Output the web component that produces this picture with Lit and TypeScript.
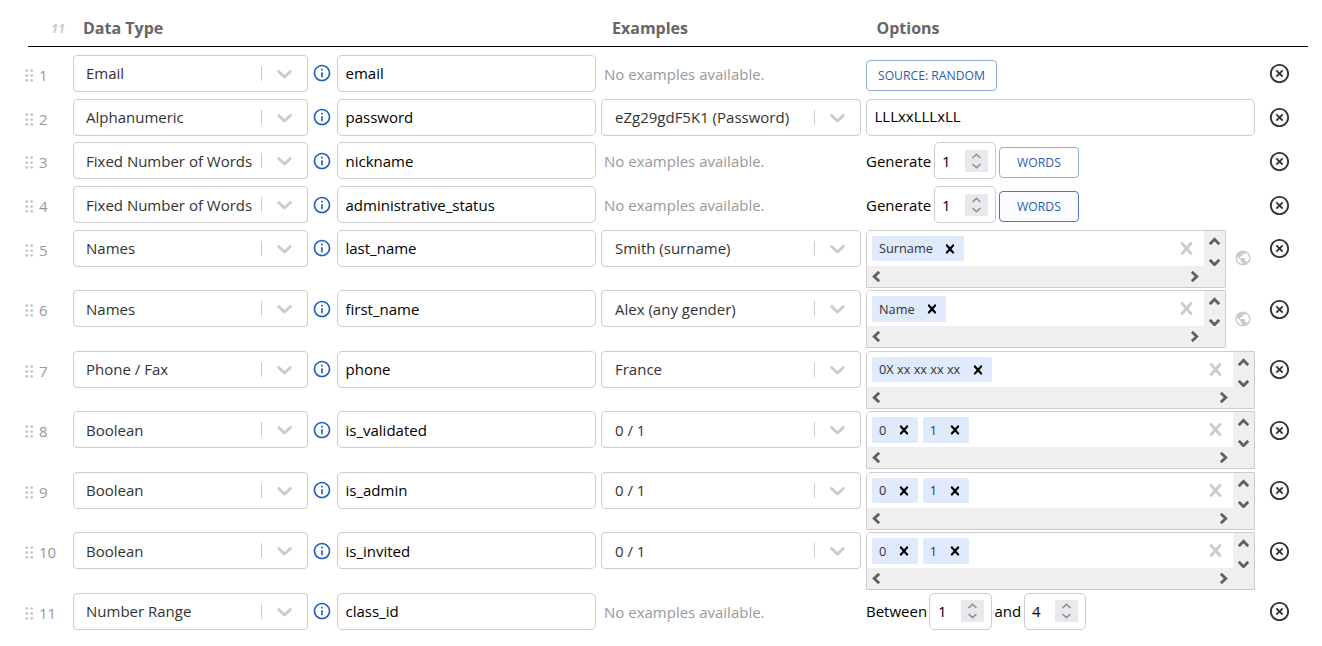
import { LitElement, html, css, svg, nothing } from "lit";
import { customElement, property } from "lit/decorators.js";
import { classMap } from "lit/directives/class-map.js";

type Options =
  | { kind: "source" }
  | { kind: "text"; value: string }
  | { kind: "words"; active?: boolean }
  | { kind: "tags"; tags: string[]; globe?: boolean }
  | { kind: "range"; from: string; to: string };

interface Row {
  type: string;
  name: string;
  example?: string;
  low?: boolean;
  options: Options;
}

const ROWS: Row[] = [
  { type: "Email", name: "email", options: { kind: "source" } },
  { type: "Alphanumeric", name: "password", example: "eZg29gdF5K1 (Password)", options: { kind: "text", value: "LLLxxLLLxLL" } },
  { type: "Fixed Number of Words", name: "nickname", low: true, options: { kind: "words" } },
  { type: "Fixed Number of Words", name: "administrative_status", low: true, options: { kind: "words", active: true } },
  { type: "Names", name: "last_name", example: "Smith (surname)", options: { kind: "tags", tags: ["Surname"], globe: true } },
  { type: "Names", name: "first_name", low: true, example: "Alex (any gender)", options: { kind: "tags", tags: ["Name"], globe: true } },
  { type: "Phone / Fax", name: "phone", example: "France", options: { kind: "tags", tags: ["0X xx xx xx xx"] } },
  { type: "Boolean", name: "is_validated", low: true, example: "0 / 1", options: { kind: "tags", tags: ["0", "1"] } },
  { type: "Boolean", name: "is_admin", example: "0 / 1", options: { kind: "tags", tags: ["0", "1"] } },
  { type: "Boolean", name: "is_invited", low: true, example: "0 / 1", options: { kind: "tags", tags: ["0", "1"] } },
  { type: "Number Range", name: "class_id", options: { kind: "range", from: "1", to: "4" } },
];

const CROSS = svg`<path d="M14.348 14.849c-0.469 0.469-1.229 0.469-1.697 0l-2.651-3.030-2.651 3.029c-0.469 0.469-1.229 0.469-1.697 0-0.469-0.469-0.469-1.229 0-1.697l2.758-3.15-2.759-3.152c-0.469-0.469-0.469-1.228 0-1.697s1.228-0.469 1.697 0l2.652 3.031 2.651-3.031c0.469-0.469 1.228-0.469 1.697 0s0.469 1.229 0 1.697l-2.758 3.152 2.758 3.15c0.469 0.469 0.469 1.229 0 1.698z"/>`;
const CHEVRON = svg`<path d="M4.516 7.548c0.436-0.446 1.043-0.481 1.576 0l3.908 3.747 3.908-3.747c0.533-0.481 1.141-0.446 1.574 0 0.436 0.445 0.408 1.197 0 1.615-0.406 0.418-4.695 4.502-4.695 4.502-0.217 0.223-0.502 0.335-0.787 0.335s-0.57-0.112-0.789-0.335c0 0-4.287-4.084-4.695-4.502s-0.436-1.17 0-1.615z"/>`;
const INFO = svg`<path d="M11 7h2v2h-2zm0 4h2v6h-2zm1-9C6.48 2 2 6.48 2 12s4.48 10 10 10 10-4.48 10-10S17.52 2 12 2zm0 18c-4.41 0-8-3.59-8-8s3.59-8 8-8 8 3.59 8 8-3.59 8-8 8z"/>`;
const REMOVE = svg`<path d="M14.59 8L12 10.59 9.41 8 8 9.41 10.59 12 8 14.59 9.41 16 12 13.41 14.59 16 16 14.59 13.41 12 16 9.41 14.59 8zM12 2C6.47 2 2 6.47 2 12s4.47 10 10 10 10-4.47 10-10S17.53 2 12 2zm0 18c-4.41 0-8-3.59-8-8s3.59-8 8-8 8 3.59 8 8-3.59 8-8 8z"/>`;
const GLOBE = svg`<path d="M12 2C6.48 2 2 6.48 2 12s4.48 10 10 10 10-4.48 10-10S17.52 2 12 2zm-1 17.93c-3.95-.49-7-3.85-7-7.93 0-.62.08-1.21.21-1.79L9 15v1c0 1.1.9 2 2 2v1.93zm6.9-2.54c-.26-.81-1-1.39-1.9-1.39h-1v-3c0-.55-.45-1-1-1H8v-2h2c.55 0 1-.45 1-1V7h2c1.1 0 2-.9 2-2v-.41c2.93 1.19 5 4.06 5 7.41 0 2.08-.8 3.97-2.1 5.39z"/>`;

const shared = css`
  * {
    box-sizing: border-box;
  }
  svg {
    display: block;
    flex: none;
  }
`;

@customElement("select-box")
export class SelectBox extends LitElement {
  @property() value = "";

  static styles = [
    shared,
    css`
      :host {
        display: flex;
        height: 37px;
        border: 1px solid #ccc;
        border-radius: 4px;
        background: #fff;
      }
      .value {
        flex: 1;
        padding-left: var(--inset, 12px);
        line-height: 35px;
        color: #333;
        white-space: nowrap;
        padding-top: var(--low, 0px);
      }
      .bar {
        width: 1px;
        height: 15px;
        margin-top: 10px;
        background: #ccc;
      }
      .arrow {
        width: 25px;
        height: 25px;
        margin: 5px 10px 0 10px;
        fill: #ccc;
      }
    `,
  ];

  render() {
    return html`<span class="value">${this.value}</span><span class="bar"></span>
      <svg class="arrow" viewBox="0 0 20 20">${CHEVRON}</svg>`;
  }
}

@customElement("number-box")
export class NumberBox extends LitElement {
  @property() value = "";

  static styles = [
    shared,
    css`
      :host {
        display: flex;
        justify-content: space-between;
        width: 62px;
        height: 37px;
        padding: 0 7px;
        border: 1px solid #ccc;
        border-radius: 5px;
        line-height: 35px;
        background: #fff;
      }
      .value {
        padding-top: var(--low, 0px);
      }
      .spin {
        margin-top: calc(6px + var(--low, 0px));
        width: 23px;
        height: 22px;
        background: #e9e9ed;
        fill: none;
        stroke: #8f8f9d;
        stroke-width: 1.6;
      }
    `,
  ];

  render() {
    return html`<span class="value">${this.value}</span>
      <svg class="spin" viewBox="0 0 23 22"><path d="M7.5 8 11.5 4.3 15.5 8M7.5 14 11.5 17.7 15.5 14" /></svg>`;
  }
}

@customElement("tag-box")
export class TagBox extends LitElement {
  @property({ attribute: false }) tags: string[] = [];

  static styles = [
    shared,
    css`
      :host {
        display: grid;
        grid-template-columns: 1fr 21px;
        grid-template-rows: 35px 21px;
        height: 58px;
        border: 1px solid #ccc;
        border-top-left-radius: 5px;
        background: #efefef;
        overflow: hidden;
      }
      .field {
        display: flex;
        gap: 5px;
        padding: 5px 5px 0;
        background: #fff;
      }
      .tag {
        display: flex;
        height: calc(25px + var(--low, 0px));
        padding: 0 5px 0 7px;
        gap: 8.5px;
        border-radius: 2px;
        background: #e0eafd;
        color: #333;
        font-size: 12.75px;
        line-height: 25px;
        white-space: nowrap;
      }
      .label {
        padding-top: var(--low, 0px);
      }
      .cross {
        width: 18px;
        height: 18px;
        margin-top: 4px;
        fill: #000;
      }
      .clear {
        width: 25px;
        height: 25px;
        margin-left: auto;
        fill: #ccc;
      }
      .vertical,
      .horizontal {
        display: flex;
        justify-content: space-between;
      }
      .vertical {
        flex-direction: column;
        align-items: center;
        padding-top: 6px;
      }
      .horizontal {
        align-items: center;
        padding: 0 5px 0 5px;
      }
      .mark {
        fill: none;
        stroke: #606060;
        stroke-width: 2.8;
      }
    `,
  ];

  render() {
    return html`
      <div class="field">
        ${this.tags.map(
          (t) => html`<span class="tag"><span class="label">${t}</span><svg class="cross" viewBox="0 0 20 20">${CROSS}</svg></span>`,
        )}
        <svg class="clear" viewBox="0 0 20 20">${CROSS}</svg>
      </div>
      <div class="vertical">
        <svg class="mark" width="11" height="8"><path d="M.8 7.2 5.5 2.2 10.2 7.2" /></svg>
        <svg class="mark" width="11" height="7"><path d="M.8 .8 5.5 5.8 10.2 .8" /></svg>
      </div>
      <div class="horizontal">
        <svg class="mark" width="8" height="11"><path d="M7.2 .8 2.2 5.5 7.2 10.2" /></svg>
        <svg class="mark" width="8" height="11"><path d="M.8 .8 5.8 5.5 .8 10.2" /></svg>
      </div>
    `;
  }
}

@customElement("app-root")
export class AppRoot extends LitElement {
  static styles = [
    shared,
    css`
      :host {
        display: block;
        height: 646px;
        overflow: hidden;
        background: #fff;
        color: #000;
        font-family: "Open Sans", "Noto Sans", sans-serif;
        font-size: 15px;
      }
      .head {
        display: grid;
        grid-template-columns: 55px 529px 264.5px 1fr;
        height: 47px;
        margin: 0 14px 8px 28px;
        padding-top: 10px;
        border-bottom: 1px solid #000;
        color: #666;
        font-size: 16px;
        font-weight: 700;
        line-height: 36px;
      }
      .count {
        padding-left: 23px;
        color: #ccc;
        font-size: 12.75px;
        font-style: italic;
        font-weight: 700;
      }
      .rows {
        display: grid;
        grid-template-rows: 44px 43px 44px 44px 60px 61px 60px 61px 60px 61px 44px;
        padding-left: 25px;
      }
      .row {
        display: grid;
        grid-template-columns: 14px 34px 235px 29px 259px 5px 260px 5px 389px 48px;
        align-items: start;
      }
      .row.low {
        --low: 1px;
      }
      .grip {
        margin-top: 14px;
        fill: #ccc;
      }
      .index {
        padding-top: 2px;
        color: #999;
        line-height: 37px;
      }
      .info {
        margin: calc(8px + var(--low, 0px)) 0 0 4px;
        fill: #2260bd;
      }
      .name,
      .text {
        width: 100%;
        height: 37px;
        margin: 0;
        padding: 0 7.5px 2px;
        border: 1px solid #ccc;
        border-radius: 5px;
        background: #fff;
        color: #000;
        font: inherit;
      }
      .low .name {
        padding: 1px 7.5px 0;
      }
      .example {
        grid-column: 7;
        --inset: 13px;
      }
      .none {
        padding: 1px 0 0 3px;
        color: #999;
        line-height: 37px;
      }
      .options {
        grid-column: 9;
        display: flex;
        line-height: 37px;
      }
      .word {
        padding-top: var(--low, 0px);
      }
      .wide {
        width: 63px;
        padding: 0 7.5px 0 8px;
      }
      .button {
        height: 31px;
        margin: 5px 0 0;
        padding: 0;
        border: 1px solid #91ade0;
        border-radius: 4px;
        background: #fff;
        color: #275cb4;
        font: inherit;
        font-size: 12.2px;
        line-height: 29px;
      }
      .source {
        width: 131px;
      }
      .words {
        width: 80px;
        margin-left: 3px;
      }
      .active {
        border-color: #4a77c4;
        background: #f9fbfe;
      }
      .gap-a {
        width: 68px;
      }
      .gap-b {
        width: 63px;
      }
      .gap-c {
        width: 32px;
        padding-left: 2.5px;
      }
      .tags {
        flex: 1;
      }
      .globe {
        margin: calc(19px + var(--low, 0px)) 3.5px 0 7.5px;
        fill: #ccc;
      }
      .remove {
        margin: calc(7px + var(--low, 0px)) 0 0 12.7px;
        fill: #333;
      }
    `,
  ];

  private options(o: Options) {
    switch (o.kind) {
      case "source":
        return html`<button class="button source">SOURCE: RANDOM</button>`;
      case "text":
        return html`<input class="text" .value=${o.value} />`;
      case "words":
        return html`<span class="word gap-a">Generate</span><number-box value="1"></number-box>
          <button class=${classMap({ button: true, words: true, active: !!o.active })}>WORDS</button>`;
      case "range":
        return html`<span class="word gap-b">Between</span><number-box class="wide" value=${o.from}></number-box>
          <span class="word gap-c">and</span><number-box value=${o.to}></number-box>`;
      case "tags":
        return html`<tag-box class="tags" .tags=${o.tags}></tag-box>
          ${o.globe ? html`<svg class="globe" width="18" height="18" viewBox="0 0 24 24">${GLOBE}</svg>` : nothing}`;
    }
  }

  render() {
    return html`
      <div class="head">
        <span class="count">11</span><span>Data Type</span><span>Examples</span><span>Options</span>
      </div>
      <div class="rows">
        ${ROWS.map(
          (r, i) => html`
            <div class=${classMap({ row: true, low: !!r.low })}>
              <svg class="grip" width="9" height="13">
                ${[1.8, 6.6].map((x) => [1.6, 6.4, 11.2].map((y) => svg`<circle cx=${x} cy=${y} r="1.5" />`))}
              </svg>
              <span class="index">${i + 1}</span>
              <select-box value=${r.type}></select-box>
              <svg class="info" width="20" height="20" viewBox="0 0 24 24">${INFO}</svg>
              <input class="name" .value=${r.name} />
              ${r.example
                ? html`<select-box class="example" value=${r.example}></select-box>`
                : html`<span class="example none">No examples available.</span>`}
              <div class="options">${this.options(r.options)}</div>
              <svg class="remove" width="23" height="23" viewBox="0 0 24 24">${REMOVE}</svg>
            </div>
          `,
        )}
      </div>
    `;
  }
}
